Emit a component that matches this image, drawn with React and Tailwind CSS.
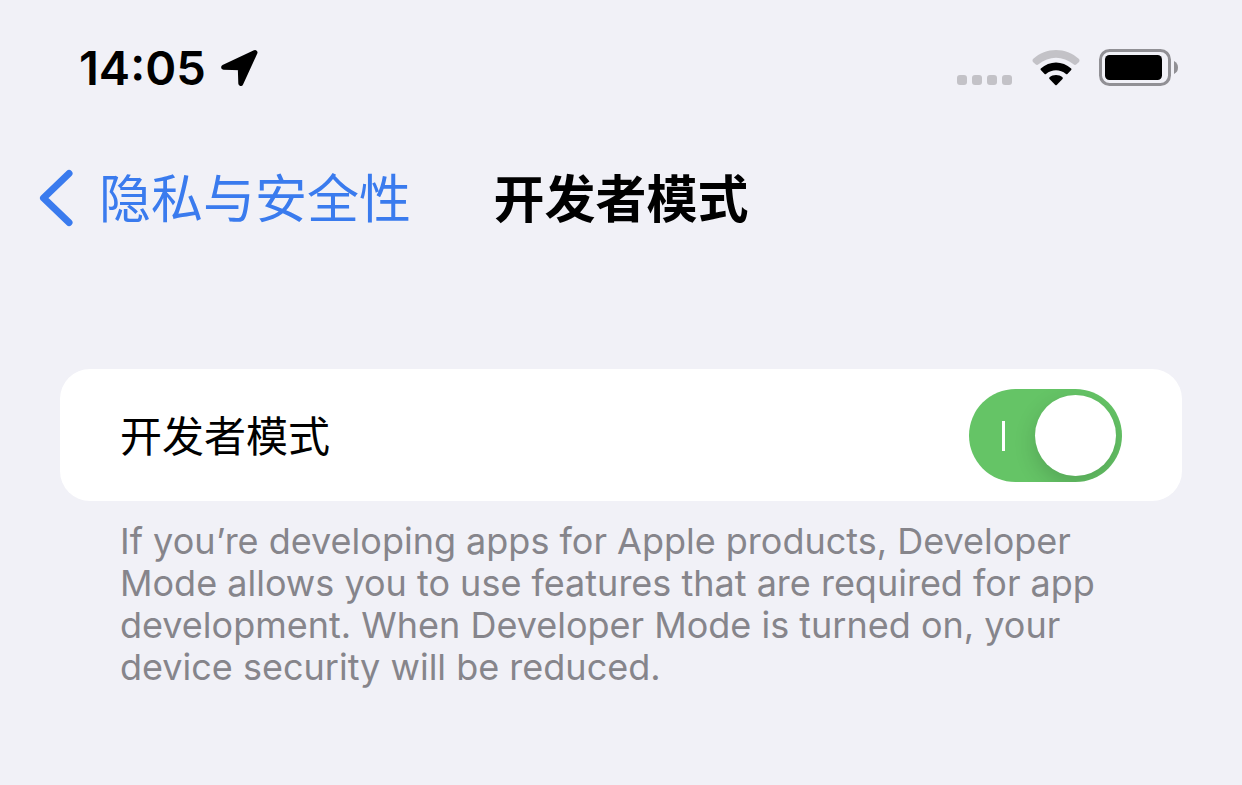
import React, { useState } from "react";

const LocationArrow = () => (
  <svg width="38" height="38" viewBox="0 0 38 38" aria-hidden="true">
    <path
      d="M35 3.500 L20.800 34.500 L20.300 18.800 L3.600 18.300 Z"
      fill="#000"
      stroke="#000"
      strokeWidth="5"
      strokeLinejoin="round"
    />
  </svg>
);

const SignalDots = () => (
  <svg width="56" height="36" viewBox="0 0 56 36" aria-hidden="true">
    {[0, 15, 30, 45].map((x) => (
      <rect key={x} x={x} y="25" width="10" height="10" rx="3" fill="#c3c2c7" />
    ))}
  </svg>
);

const Wifi = () => (
  <svg width="48" height="36" viewBox="0 0 48 36" aria-hidden="true">
    <path
      d="M1 9 C14 -3 34 -3 47 9 Q48 10.5 47 12 L44.5 14.3 Q43 15.5 41.5 14.3 C31 5.5 17 5.5 6.500 14.3 Q5 15.500 3.500 14.3 L1 12 Q0 10.500 1 9 Z"
      fill="#c3c2c7"
    />
    <path
      d="M8.800 18.600 C17.500 10.600 30.500 10.600 39.200 18.600 Q39.800 19.300 39.200 20 L35.400 23.900 Q34.700 24.500 34 23.900 C28 19 20 19 14 23.900 Q13.300 24.500 12.600 23.900 L8.800 20 Q8.200 19.300 8.800 18.600 Z"
      fill="#000"
    />
    <path
      d="M17.500 27.200 C21 24.300 27 24.300 30.500 27.200 Q31.200 28.200 30.500 29 L24.700 35 Q24 35.600 23.300 35 L17.500 29 Q16.800 28.200 17.500 27.200 Z"
      fill="#000"
    />
  </svg>
);

const Battery = () => (
  <svg width="80" height="38" viewBox="0 0 80 38" aria-hidden="true">
    <rect
      x="1.5"
      y="1.5"
      width="69"
      height="34"
      rx="9"
      fill="none"
      stroke="#919095"
      strokeWidth="3"
    />
    <rect x="6" y="6" width="57" height="25" rx="4.500" fill="#000" />
    <path d="M75 12 Q79 14 79 18.500 Q79 23 75 25 Z" fill="#919095" />
  </svg>
);

const StatusBar = () => (
  <div className="flex h-14 items-center justify-between pl-[79px] pr-[63px]">
    <div className="flex items-center gap-[14px]">
      <span className="font-[Inter,sans-serif] text-[47px] leading-[56px] font-semibold">
        14:05
      </span>
      <LocationArrow />
    </div>
    <div className="flex items-center gap-[19px]">
      <SignalDots />
      <Wifi />
      <Battery />
    </div>
  </div>
);

const App = () => {
  const [enabled, setEnabled] = useState(true);

  return (
    <div className="min-h-screen bg-[#f1f1f7] pt-10 font-['Noto_Sans_CJK_SC',sans-serif] text-black">
      <StatusBar />

      {/* navigation bar */}
      <header className="mt-[70px] grid h-16 grid-cols-[1fr_auto_1fr] items-center px-[39px]">
        <button
          type="button"
          className="flex items-center gap-[26px] justify-self-start whitespace-nowrap text-[52px] leading-[58px] text-[#3a7bee]"
        >
          <svg width="34" height="58" viewBox="0 0 34 58" aria-hidden="true">
            <path
              d="M30 4.500 L4.500 29 L30 53.500"
              fill="none"
              stroke="#3a7bee"
              strokeWidth="7"
              strokeLinecap="round"
              strokeLinejoin="round"
            />
          </svg>
          <span className="pb-1">隐私与安全性</span>
        </button>
        <h1 className="whitespace-nowrap pb-1 text-[51px] leading-[58px] font-bold">
          开发者模式
        </h1>
      </header>

      {/* setting */}
      <main className="mt-[139px] px-[60px]">
        <div className="flex items-center justify-between rounded-[30px] bg-white px-[60px] pt-5 pb-[19px]">
          <label
            htmlFor="developer-mode"
            className="pb-1 text-[42px] leading-[58px]"
          >
            开发者模式
          </label>
          <input
            id="developer-mode"
            type="checkbox"
            role="switch"
            aria-describedby="developer-mode-note"
            checked={enabled}
            onChange={(e) => setEnabled(e.target.checked)}
            className="flex h-[93px] w-[153px] cursor-pointer appearance-none items-center justify-between overflow-hidden rounded-full bg-[#e9e9eb] px-[6px] before:ml-[27px] before:h-[30px] before:w-[3px] before:bg-white after:size-[81px] after:rounded-full after:bg-white after:shadow-[0_8px_22px_rgba(0,0,0,0.16)] checked:bg-[#65c466] not-checked:flex-row-reverse"
          />
        </div>
        <p
          id="developer-mode-note"
          className="px-[60px] pt-[19px] font-[Inter,sans-serif] text-[36px] leading-[42px] text-[#86858b]"
        >
          If you’re developing apps for Apple products, Developer Mode allows
          you to use features that are required for app development. When
          Developer Mode is turned on, your device security will be reduced.
        </p>
      </main>
    </div>
  );
};

export default App;
